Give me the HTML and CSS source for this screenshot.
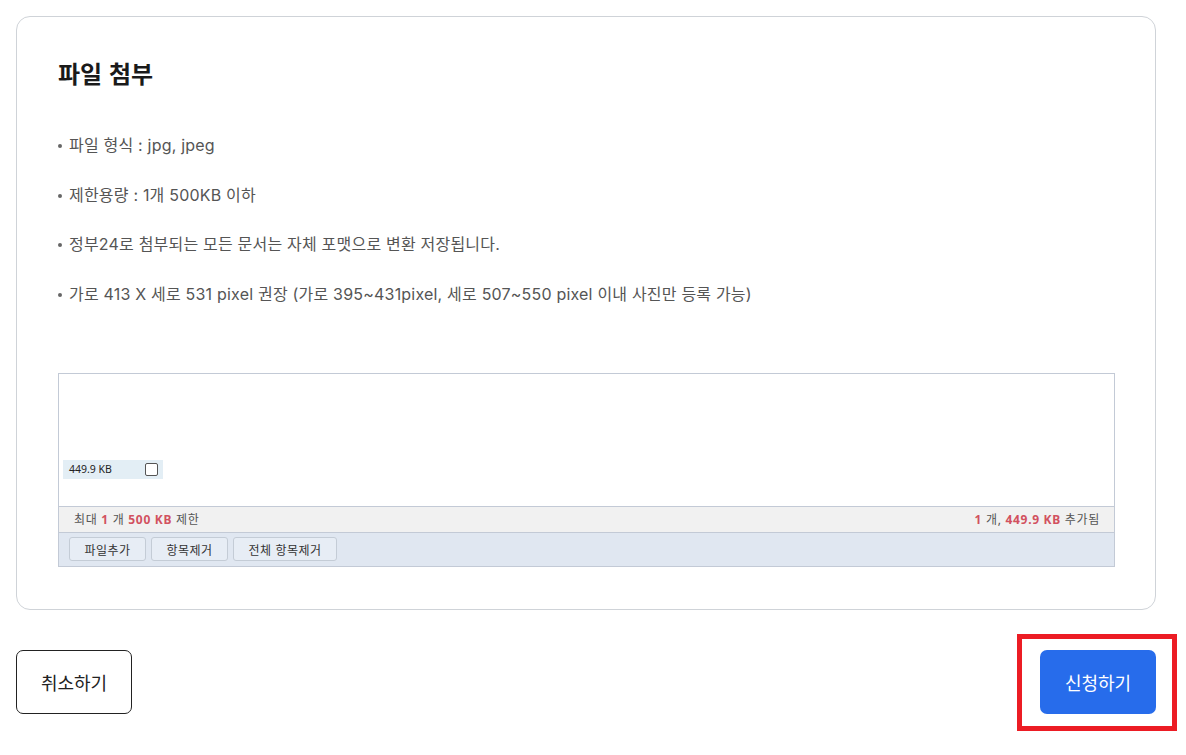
FILE: index.html
```html
<!DOCTYPE html>
<html lang="ko">
<head>
<meta charset="utf-8">
<title>파일 첨부</title>
<link rel="stylesheet" href="styles.css">
</head>
<body>
<div class="page">
  <section class="card">
    <h2 class="title">파일 첨부</h2>
    <ul class="notes">
      <li>파일 형식 : jpg, jpeg</li>
      <li>제한용량 : 1개 500KB 이하</li>
      <li>정부24로 첨부되는 모든 문서는 자체 포맷으로 변환 저장됩니다.</li>
      <li>가로 413 X 세로 531 pixel 권장 (가로 395~431pixel, 세로 507~550 pixel 이내 사진만 등록 가능)</li>
    </ul>
    <div class="uploader">
      <div class="file-area">
        <div class="file-item">
          <span class="file-size">449.9 KB</span>
          <span class="check"></span>
        </div>
      </div>
      <div class="status">
        <span>최대 <b>1</b> 개 <b>500 KB</b> 제한</span>
        <span><b>1</b> 개, <b>449.9 KB</b> 추가됨</span>
      </div>
      <div class="toolbar">
        <button class="tool-btn w77">파일추가</button>
        <button class="tool-btn w77">항목제거</button>
        <button class="tool-btn w104">전체 항목제거</button>
      </div>
    </div>
  </section>
  <div class="actions">
    <button class="btn cancel">취소하기</button>
    <div class="submit-wrap">
      <button class="btn submit">신청하기</button>
      <span class="highlight"></span>
    </div>
  </div>
</div>
</body>
</html>
```
FILE: styles.css
```css
html, body {
  margin: 0;
  padding: 0;
  background: #fff;
}
body {
  font-family: "Noto Sans", "Noto Sans CJK KR", sans-serif;
  color: #222;
  min-height: 755px;
}
.page {
  width: 1140px;
  padding: 16px 0 40px 16px;
}
.card {
  border: 1px solid #cfd3d8;
  border-radius: 14px;
  padding: 38px 40px 42px 40px;
}
.title {
  margin: 0;
  font-family: "Noto Sans CJK KR", sans-serif;
  font-size: 24px;
  font-weight: 700;
  line-height: 36px;
  color: #1a1a1a;
  padding-left: 1px;
}
.notes {
  list-style: none;
  margin: 42px 0 0 0;
  padding: 0;
}
.notes li {
  position: relative;
  font-family: "Inter", "Noto Sans CJK KR", sans-serif;
  font-size: 16px;
  line-height: 24px;
  color: #555;
  padding-left: 12px;
  margin-bottom: 25.5px;
  letter-spacing: 0.2px;
}
.notes li::before {
  content: "";
  position: absolute;
  left: 1px;
  top: 11px;
  width: 4px;
  height: 4px;
  border-radius: 50%;
  background: #666;
}
.notes li:last-child {
  margin-bottom: 0;
}
.uploader {
  margin-top: 67px;
  margin-left: 1px;
  border: 1px solid #c3cad6;
  font-size: 12px;
  color: #555;
}
.file-area {
  height: 132px;
  display: flex;
  flex-direction: column;
  justify-content: flex-end;
  padding: 0 0 27px 4px;
  box-sizing: border-box;
}
.file-item {
  width: 100px;
  height: 19px;
  background: #e3eef5;
  display: flex;
  align-items: center;
  justify-content: space-between;
  padding: 0 5px 0 6px;
  box-sizing: border-box;
}
.file-size {
  font-size: 10.5px;
  color: #222;
}
.check {
  width: 11px;
  height: 11px;
  border: 1px solid #555;
  border-radius: 2px;
  background: #fff;
}
.status {
  height: 25px;
  background: #f1f1f1;
  border-top: 1px solid #c3cad6;
  border-bottom: 1px solid #c3cad6;
  display: flex;
  align-items: center;
  justify-content: space-between;
  padding: 0 14px 0 15px;
  font-size: 12px;
  color: #555;
  letter-spacing: 0.7px;
}
.status b {
  color: #d2515f;
  font-weight: 700;
}
.toolbar {
  height: 33px;
  background: #e0e7f1;
  display: flex;
  align-items: center;
  gap: 5px;
  padding: 0 10px;
}
.tool-btn {
  height: 24px;
  border: 1px solid #c4ccd6;
  border-radius: 3px;
  background: #e7edf5;
  font-family: "Noto Sans CJK KR", sans-serif;
  font-size: 12px;
  letter-spacing: 0.5px;
  color: #333;
  padding: 0;
}
.w77 { width: 77px; }
.w104 { width: 104px; }
.actions {
  display: flex;
  justify-content: space-between;
  margin-top: 40px;
}
.btn {
  height: 64px;
  width: 116px;
  border-radius: 7px;
  font-family: "Noto Sans CJK KR", sans-serif;
  font-size: 18px;
  padding: 0;
}
.cancel {
  background: #fff;
  border: 1px solid #222;
  color: #222;
}
.submit {
  background: #276ceb;
  border: none;
  color: #fff;
  display: block;
}
.submit-wrap {
  position: relative;
}
.highlight {
  position: absolute;
  left: -23px;
  top: -16px;
  width: 160px;
  height: 97px;
  border: 5px solid #ec1c24;
  box-sizing: border-box;
  pointer-events: none;
}
```
